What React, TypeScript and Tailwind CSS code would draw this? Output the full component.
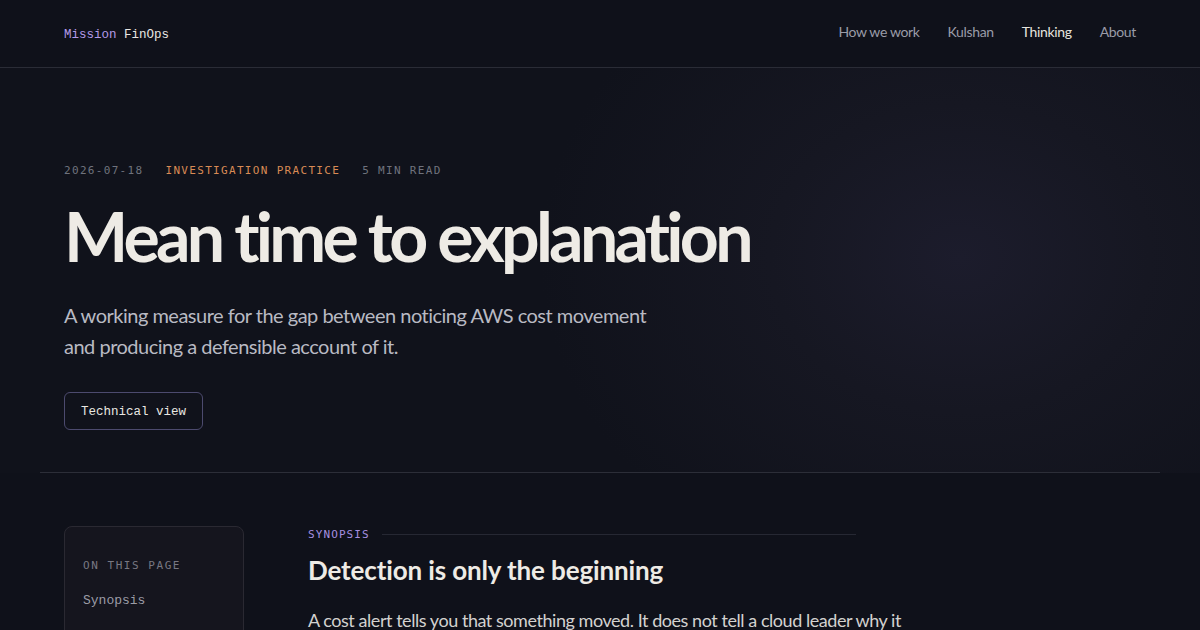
import React from "react";

const sans = { fontFamily: "Lato, 'Noto Sans', sans-serif" };
const mono = { fontFamily: "'Liberation Mono', 'DejaVu Sans Mono', monospace" };
const monoMeta = { fontFamily: "'DejaVu Sans Mono', 'Liberation Mono', monospace" };

function Header() {
  return (
    <header className="h-[68px] border-b border-[#2a2c36] bg-[#0f111a] flex items-center justify-between px-16">
      <a className="mt-[3px] text-[12.5px]" style={mono}>
        <span className="text-[#b39ae8]">Mission</span>{" "}
        <span className="text-[#e9e7e2]">FinOps</span>
      </a>
      <nav className="flex items-center gap-7 text-[14px] tracking-[-0.025em] -mt-1" style={sans}>
        <a className="text-[#9a9ca8]">How we work</a>
        <a className="text-[#9a9ca8]">Kulshan</a>
        <a className="text-[#e6e4df]">Thinking</a>
        <a className="text-[#9a9ca8]">About</a>
      </nav>
    </header>
  );
}

function Hero() {
  return (
    <section className="relative overflow-hidden bg-[radial-gradient(ellipse_420px_340px_at_960px_190px,#1c1c2c_0%,#161722_45%,#10121b_100%)]">
      <div className="px-16 pt-[95px] pb-[42px]">
        <div className="flex items-center gap-[22px] text-[11px] uppercase tracking-[0.12em]" style={monoMeta}>
          <span className="text-[#6f727d]">2026-07-18</span>
          <span className="text-[#d98b55]">Investigation practice</span>
          <span className="text-[#6f727d]">5 min read</span>
        </div>
        <h1
          className="mt-[18px] text-[68px] leading-[76px] font-bold tracking-[-0.055em] text-[#eeebe5]"
          style={sans}
        >
          Mean time to explanation
        </h1>
        <p
          className="mt-[26px] max-w-[600px] text-[20px] leading-[31px] tracking-[-0.025em] text-[#b9bac3]"
          style={sans}
        >
          A working measure for the gap between noticing AWS cost movement and producing a defensible account of it.
        </p>
        <button
          className="mt-[30px] h-[38px] px-4 pt-[3px] rounded-md border border-[#4c4a6e] text-[12.5px] text-[#e9e7e2]"
          style={mono}
        >
          Technical view
        </button>
      </div>
      <div className="mx-10 border-t border-[#2c2e38]" />
    </section>
  );
}

function Body() {
  return (
    <section className="bg-[#0f111a] px-16 pt-[53px] flex gap-16">
      <aside className="w-[180px] shrink-0 rounded-lg border border-[#2a2932] bg-[#15151e] px-[18px] pt-[31px] pb-10 h-[160px]">
        <div className="text-[11px] uppercase tracking-[0.14em] text-[#787882]" style={monoMeta}>
          On this page
        </div>
        <div className="mt-[17px] text-[13px] text-[#9c9ca6]" style={mono}>
          Synopsis
        </div>
      </aside>
      <article className="flex-1 max-w-[620px]">
        <div className="flex items-center gap-3 w-[548px] mt-[1px]">
          <span className="text-[11px] uppercase tracking-[0.1em] text-[#a68fe0]" style={monoMeta}>
            Synopsis
          </span>
          <div className="flex-1 border-t border-[#262833]" />
        </div>
        <h2 className="mt-[11px] text-[26px] leading-[32px] font-bold text-[#eeebe5] tracking-[-0.005em]" style={sans}>
          Detection is only the beginning
        </h2>
        <p className="mt-[19px] text-[18px] leading-[30px] tracking-[-0.025em] text-[#d3d2d0]" style={sans}>
          A cost alert tells you that something moved. It does not tell a cloud leader why it moved, who owns it, or whether it matters.
        </p>
      </article>
    </section>
  );
}

export default function App() {
  return (
    <div className="w-[1200px] h-[630px] overflow-hidden bg-[#0f111a]">
      <Header />
      <Hero />
      <Body />
    </div>
  );
}
